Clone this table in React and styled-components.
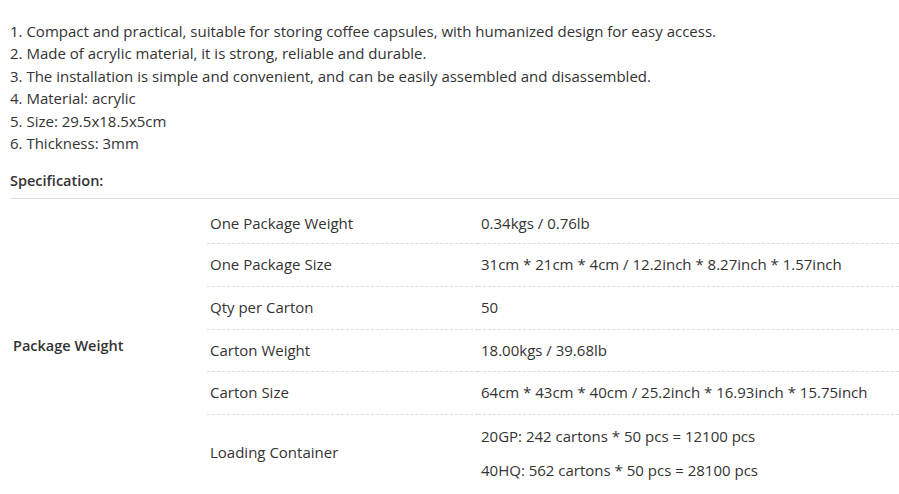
import React from "react";
import styled, { createGlobalStyle } from "styled-components";

const GlobalStyle = createGlobalStyle`
  html, body { margin: 0; padding: 0; background: #fff; }
  body {
    font-family: "Open Sans", "Liberation Sans", Arial, sans-serif;
    font-size: 15px;
    color: #333;
  }
`;

const Page = styled.div`
  padding: 20px 0 0 10px;
`;

const Features = styled.div`
  display: flex;
  flex-direction: column;
`;

const Feature = styled.p`
  margin: 0;
  line-height: 22.4px;
`;

const Heading = styled.h3`
  margin: 16px 0 0;
  padding: 0 0 6px;
  font-size: 14.5px;
  font-weight: 600;
  line-height: 22px;
  color: #333;
  border-bottom: 1px solid #ddd;
`;

const Table = styled.table`
  width: 100%;
  border-collapse: collapse;
  margin-top: 2px;
`;

const GroupCell = styled.th`
  width: 197px;
  padding: 0 3px;
  text-align: left;
  vertical-align: middle;
  font-size: 14.5px;
  font-weight: 600;
  color: #333;
  line-height: 22px;
  box-sizing: border-box;
`;

const Cell = styled.td`
  padding: ${(p) => (p.$first ? "12px 3px 8px" : "10px 3px")};
  line-height: 21.7px;
  vertical-align: middle;
  color: #333;
  border-bottom: ${(p) => (p.$last ? "none" : "1px dashed #ddd")};
  width: ${(p) => p.$width || "auto"};
  box-sizing: border-box;
`;

const ValueLines = styled.div`
  display: flex;
  flex-direction: column;
  gap: 12px;
  line-height: 22px;
`;

const features = [
  "1. Compact and practical, suitable for storing coffee capsules, with humanized design for easy access.",
  "2. Made of acrylic material, it is strong, reliable and durable.",
  "3. The installation is simple and convenient, and can be easily assembled and disassembled.",
  "4. Material: acrylic",
  "5. Size: 29.5x18.5x5cm",
  "6. Thickness: 3mm",
];

const rows = [
  ["One Package Weight", ["0.34kgs / 0.76lb"]],
  ["One Package Size", ["31cm * 21cm * 4cm / 12.2inch * 8.27inch * 1.57inch"]],
  ["Qty per Carton", ["50"]],
  ["Carton Weight", ["18.00kgs / 39.68lb"]],
  ["Carton Size", ["64cm * 43cm * 40cm / 25.2inch * 16.93inch * 15.75inch"]],
  [
    "Loading Container",
    ["20GP: 242 cartons * 50 pcs = 12100 pcs", "40HQ: 562 cartons * 50 pcs = 28100 pcs"],
  ],
];

export default function App() {
  return (
    <>
      <GlobalStyle />
      <Page>
        <Features>
          {features.map((f) => (
            <Feature key={f}>{f}</Feature>
          ))}
        </Features>
        <Heading>Specification:</Heading>
        <Table>
          <tbody>
            {rows.map(([name, values], i) => {
              const last = i === rows.length - 1;
              const first = i === 0;
              return (
                <tr key={name}>
                  {first && <GroupCell rowSpan={rows.length}>Package Weight</GroupCell>}
                  <Cell $first={first} $last={last} $width="271px">
                    {name}
                  </Cell>
                  <Cell $first={first} $last={last}>
                    {values.length > 1 ? (
                      <ValueLines>
                        {values.map((v) => (
                          <span key={v}>{v}</span>
                        ))}
                      </ValueLines>
                    ) : (
                      values[0]
                    )}
                  </Cell>
                </tr>
              );
            })}
          </tbody>
        </Table>
      </Page>
    </>
  );
}
